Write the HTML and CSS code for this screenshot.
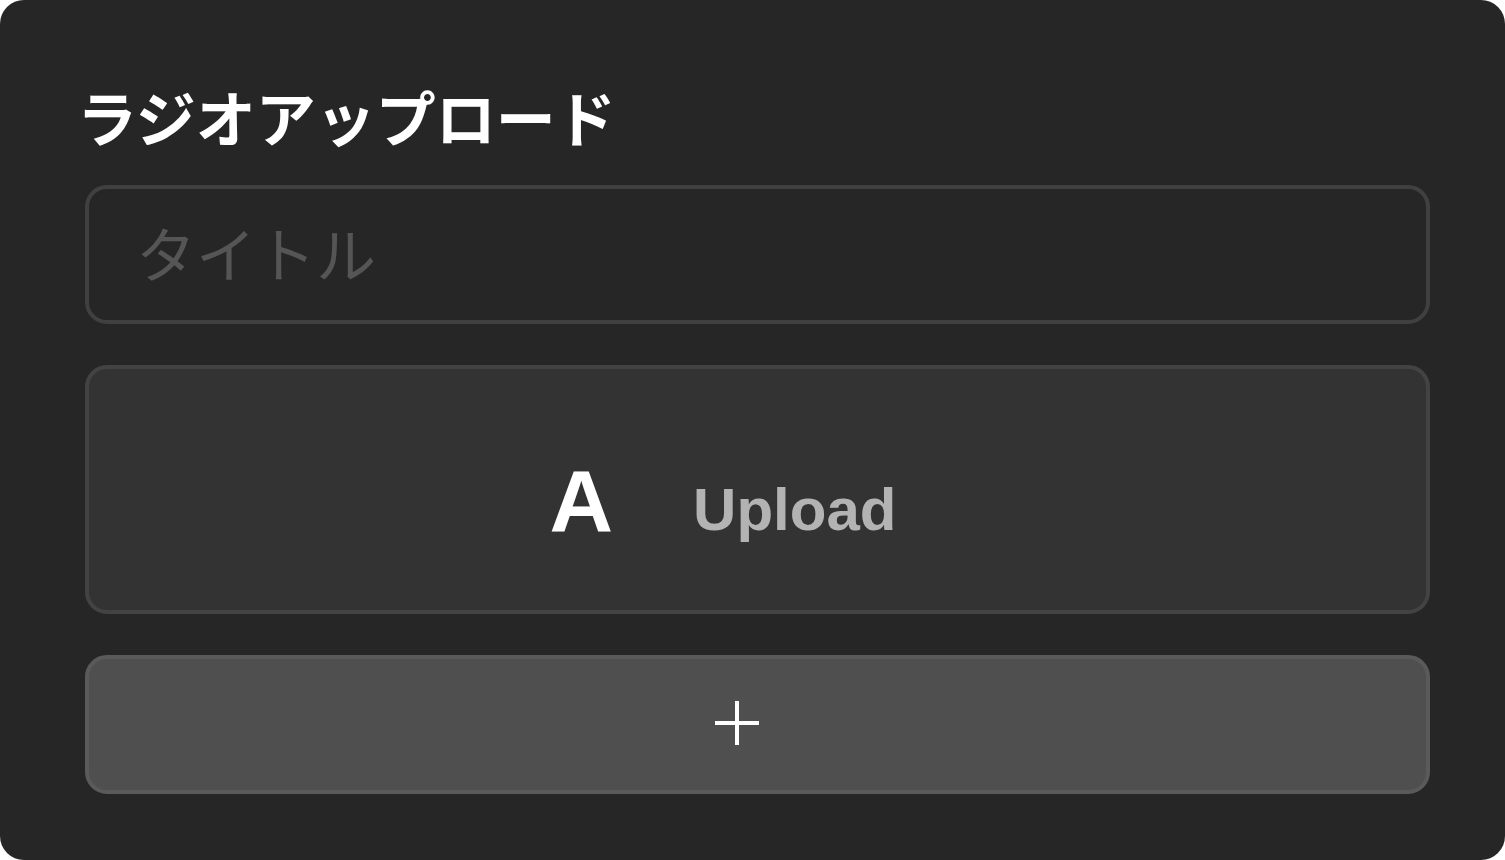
FILE: index.html
```html
<!DOCTYPE html>
<html lang="ja">
<head>
<meta charset="utf-8">
<link rel="stylesheet" href="styles.css">
</head>
<body>
<div class="card">
  <h1 class="title">ラジオアップロード</h1>
  <input class="field" type="text" placeholder="タイトル">
  <div class="upload">
    <span class="upload-icon">A</span>
    <span class="upload-label">Upload</span>
  </div>
  <button class="add" type="button" aria-label="add">
    <svg width="46" height="46" viewBox="0 0 46 46"><path d="M23 1v44M1 23h44" stroke="#fff" stroke-width="4" fill="none"/></svg>
  </button>
</div>
</body>
</html>
```
FILE: styles.css
```css
html, body {
  margin: 0;
  padding: 0;
  background: #ffffff;
}
.card {
  box-sizing: border-box;
  width: 1505px;
  height: 860px;
  background: #262626;
  border-radius: 24px;
  padding: 76px 75px 66px 85px;
  display: flex;
  flex-direction: column;
  font-family: "Noto Sans CJK JP", "Liberation Sans", sans-serif;
}
.title {
  margin: 0 0 29px -8px;
  font-size: 60px;
  line-height: 80px;
  font-weight: 700;
  color: #ffffff;
  letter-spacing: 0;
}
.field {
  box-sizing: border-box;
  width: 100%;
  height: 139px;
  margin: 0;
  border: 4px solid #404040;
  border-radius: 22px;
  background: #262626;
  padding: 0 0 6px 47px;
  font-family: "Noto Sans CJK JP", sans-serif;
  font-size: 60px;
  color: #ffffff;
  outline: none;
}
.field::placeholder {
  color: #555555;
}
.upload {
  box-sizing: border-box;
  height: 249px;
  margin-top: 41px;
  border: 4px solid #434343;
  border-radius: 22px;
  background: #333333;
  display: flex;
  align-items: center;
  justify-content: center;
  gap: 80px;
  padding: 22px 69px 0 0;
  font-family: "Liberation Sans", Arial, sans-serif;
  font-weight: 700;
}
.upload-icon {
  font-size: 88px;
  line-height: 1;
  color: #ffffff;
}
.upload-label {
  font-size: 60px;
  line-height: 1;
  color: #b3b3b3;
  padding-top: 18px;
}
.add {
  box-sizing: border-box;
  height: 139px;
  margin-top: 41px;
  border: 4px solid #5a5a5a;
  border-radius: 22px;
  background: #4f4f4f;
  display: flex;
  align-items: center;
  justify-content: center;
  padding: 0 41px 4px 0;
  cursor: pointer;
}
.add svg {
  display: block;
}
```
